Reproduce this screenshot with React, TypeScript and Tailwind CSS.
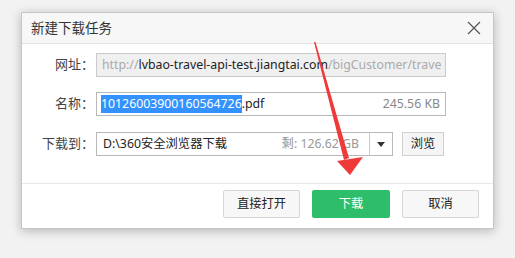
import React from "react";

const font = { fontFamily: '"Noto Sans", "Noto Sans CJK SC", sans-serif' };

export default function App() {
  return (
    <div
      className="relative w-[515px] h-[258px] bg-[#f2f2f2] pt-[12px] pl-[21px] text-[12.3px] text-[#333]"
      style={font}
    >
      <div className="w-[473px] h-[217px] bg-white border border-[#c6c6c6] shadow-[0_2px_10px_rgba(0,0,0,0.25)] flex flex-col">
        {/* title */}
        <div className="h-[31px] shrink-0 bg-[#f7f7f7] border-b border-[#e2e2e2] flex items-center justify-between pl-[9px] pr-[12px]">
          <span className="text-[13.5px] text-[#333]">新建下载任务</span>
          <svg width="14" height="14" viewBox="0 0 14 14">
            <path d="M1 1 L13 13 M13 1 L1 13" stroke="#555" strokeWidth="1.2" />
          </svg>
        </div>
        {/* body */}
        <div className="flex flex-col pt-[9px] flex-1">
          <div className="flex items-center h-[24px]">
            <div className="w-[74px] text-right pr-[2px] text-[#444] text-[13px]">网址：</div>
            <div className="w-[350px] h-[24px] border border-[#cacaca] bg-[#f0f0f0] flex items-center pl-[5px] overflow-hidden whitespace-nowrap">
              <span className="text-[#aaa]">http://</span>
              <span className="text-[#222]">lvbao-travel-api-test.jiangtai.com</span>
              <span className="text-[#aaa]">/bigCustomer/trave</span>
            </div>
          </div>
          <div className="flex items-center h-[24px] mt-[15px]">
            <div className="w-[74px] text-right pr-[2px] text-[#444] text-[13px]">名称：</div>
            <div className="w-[350px] h-[24px] border border-[#b8b8b8] bg-white flex items-center pl-[4px] pr-[5px] whitespace-nowrap">
              <span className="bg-[#3392ff] text-white">10126003900160564726</span>
              <span className="text-[#222]">.pdf</span>
              <span className="ml-auto text-[#888]">245.56 KB</span>
            </div>
          </div>
          <div className="flex items-center h-[24px] mt-[16px]">
            <div className="w-[74px] text-right pr-[2px] text-[#444] text-[13px]">下载到：</div>
            <div className="w-[297px] h-[24px] border border-[#b8b8b8] bg-white flex items-center whitespace-nowrap">
              <span className="pl-[6px] text-[#222]">D:\360安全浏览器下载</span>
              <span className="ml-auto pr-[10px] text-[#999]">剩: 126.62 GB</span>
              <div className="w-[23px] h-full border-l border-[#c8c8c8] flex items-center justify-center">
                <svg width="8" height="5" viewBox="0 0 8 5">
                  <path d="M0 0 L8 0 L4 5 Z" fill="#333" />
                </svg>
              </div>
            </div>
            <div className="ml-[9px] w-[42px] h-[24px] border border-[#d0d0d0] bg-[#f5f5f5] flex items-center justify-center text-[#222]">
              浏览
            </div>
          </div>
          <div className="mt-auto h-[45px] border-t border-[#e8e8e8] flex items-start justify-end pt-[6px] pr-[14px] gap-[12px]">
            <div className="w-[77px] h-[28px] border border-[#d6d6d6] bg-[#f7f7f7] rounded-[2px] flex items-center justify-center text-[#222]">
              直接打开
            </div>
            <div className="w-[78px] h-[28px] bg-[#2ebd68] rounded-[2px] flex items-center justify-center text-white">
              下载
            </div>
            <div className="w-[77px] h-[28px] border border-[#d6d6d6] bg-[#f7f7f7] rounded-[2px] flex items-center justify-center text-[#222]">
              取消
            </div>
          </div>
        </div>
      </div>
      <svg className="absolute left-0 top-0 pointer-events-none" width="515" height="258" viewBox="0 0 515 258">
        <path d="M314 42 L315.5 42 L349 158 L344 160 Z" fill="#f03a3a" />
        <path d="M337 161 L363 157 L350 175 Z" fill="#f03a3a" />
      </svg>
    </div>
  );
}
